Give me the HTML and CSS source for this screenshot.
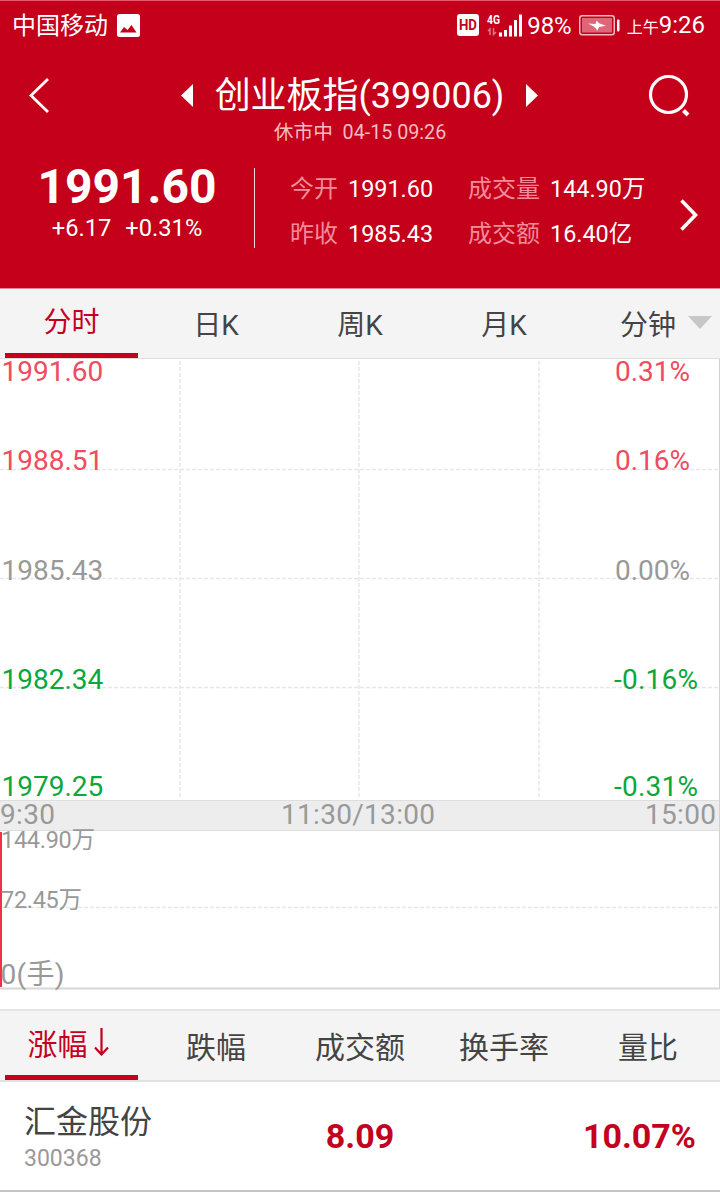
FILE: index.html
```html
<!DOCTYPE html>
<html lang="zh-CN">
<head>
<meta charset="utf-8">
<title>创业板指</title>
<link rel="stylesheet" href="styles.css">
</head>
<body>
<div class="screen">
  <header class="header">
    <div class="status">
      <span class="carrier">中国移动</span>
      <svg class="photo" width="23" height="23" viewBox="0 0 23 23"><rect width="23" height="23" rx="2.5" fill="#fff"/><path d="M3 18.500L7 13L10.500 16L14.500 11L19.500 18.500Z" fill="#c4001a"/></svg>
      <span class="grow"></span>
      <svg class="signal" width="65" height="25" viewBox="0 0 65 25">
        <rect x="0" y="1" width="22" height="22" rx="3" fill="#fff"/>
        <text x="11" y="17.2" class="hd" textLength="18" lengthAdjust="spacingAndGlyphs">HD</text>
        <text x="30" y="11" class="fourg" textLength="13" lengthAdjust="spacingAndGlyphs">4G</text>
        <path d="M33 22V16L31 18M36.500 15V21.500L39 19" fill="none" stroke="#e47684" stroke-width="1.500"/>
        <path d="M43.500 23.500V19.500M48.500 23.500V17M53.500 23.500V12.500M58.500 23.500V7M63.500 23.500V1.500" stroke="#fff" stroke-width="3"/>
      </svg>
      <span class="percent">98%</span>
      <svg class="battery" width="41" height="21" viewBox="0 0 41 21">
        <rect x=".75" y=".75" width="34.500" height="19" rx="2.500" fill="none" stroke="#f3b9c0" stroke-width="1.500"/>
        <rect x="3" y="3" width="30" height="14.500" fill="#df6677"/>
        <path d="M9 8.500L16.500 9L17.500 5.500L20.500 8.500L27 10.800L20 12L18.500 15.500L15.500 12Z" fill="#fff"/>
        <rect x="38" y="4.500" width="2.500" height="12" rx="1" fill="#fff"/>
      </svg>
      <span class="clock"><span class="ampm">上午</span>9:26</span>
    </div>
    <div class="titlebar">
      <svg width="22" height="36" viewBox="0 0 22 36"><path d="M20 1L3 17.500L20 34" fill="none" stroke="#fff" stroke-width="2.800"/></svg>
      <div class="title">
        <svg width="12" height="24" viewBox="0 0 12 24"><path d="M12 0V23L0 11.500Z" fill="#fff"/></svg>
        <h1>创业板指(399006)</h1>
        <svg width="12" height="24" viewBox="0 0 12 24"><path d="M0 0V23L12 11.500Z" fill="#fff"/></svg>
      </div>
      <svg width="44" height="44" viewBox="0 0 44 44"><circle cx="21.500" cy="20.500" r="18" fill="none" stroke="#fff" stroke-width="3.200"/><path d="M36.500 36.500L41 41" stroke="#fff" stroke-width="4"/></svg>
    </div>
    <div class="session">休市中&nbsp; 04-15 09:26</div>
    <div class="quote">
      <div class="price">
        <strong>1991.60</strong>
        <div class="change"><span>+6.17</span><span>+0.31%</span></div>
      </div>
      <div class="stats">
        <span class="label">今开</span><span>1991.60</span><span class="label">成交量</span><span>144.90万</span>
        <span class="label">昨收</span><span>1985.43</span><span class="label">成交额</span><span>16.40亿</span>
      </div>
      <svg class="more" width="20" height="32" viewBox="0 0 20 32"><path d="M1.500 1.500L15.500 16L1.500 30.500" fill="none" stroke="#fff" stroke-width="3.600"/></svg>
    </div>
  </header>

  <nav class="tabs periods">
    <div class="tab active">分时</div>
    <div class="tab">日K</div>
    <div class="tab">周K</div>
    <div class="tab">月K</div>
    <div class="tab">分钟<svg class="drop" width="24" height="13" viewBox="0 0 24 13"><path d="M0 0H24L12 13Z" fill="#c7c7c7"/></svg></div>
  </nav>

  <svg class="chart" width="720" height="631" viewBox="0 359 720 631">
    <g class="grid">
      <path d="M180 361V797M359 361V797M539 361V797"/>
      <path d="M0 469.500H719M0 578.500H719M0 687.500H719M0 907.500H719"/>
    </g>
    <rect x="0" y="800" width="719" height="31" fill="#ededed"/>
    <path d="M0 800.500H719M0 830.500H719" stroke="#dedede"/>
    <path d="M0 988.500H720" stroke="#d6d6d6" stroke-width="2"/>
    <path d="M719.500 359V989" stroke="#d2d2d2"/>
    <rect x="0" y="832" width="2" height="155" fill="#f0304c"/>
    <g class="up"><text x="1.500" y="380.500">1991.60</text><text x="1.500" y="469.500">1988.51</text><text x="615" y="380.500">0.31%</text><text x="615" y="469.500">0.16%</text></g>
    <g class="flat"><text x="1.500" y="579.500">1985.43</text><text x="615" y="579.500">0.00%</text></g>
    <g class="down"><text x="1.500" y="688.500">1982.34</text><text x="1.500" y="795.500">1979.25</text><text x="614" y="688.500" textLength="84">-0.16%</text><text x="614" y="795.500" textLength="84">-0.31%</text></g>
    <g class="axis"><text x="0" y="823.500" textLength="55">9:30</text><text x="281" y="823.500" textLength="154">11:30/13:00</text><text x="645" y="823.500" textLength="71">15:00</text></g>
    <g class="flat"><text class="vol" x="1" y="847.500" textLength="94">144.90万</text><text class="vol" x="1" y="907.500" textLength="81">72.45万</text><text x="0.500" y="984" textLength="64">0(手)</text></g>
  </svg>

  <nav class="tabs ranks">
    <div class="tab active">涨幅<svg class="sort" width="15" height="28" viewBox="0 0 15 28"><path d="M7.500 0V26M1 19.500L7.500 26.500L14 19.500" fill="none" stroke="#c4001f" stroke-width="2.200"/></svg></div>
    <div class="tab">跌幅</div>
    <div class="tab">成交额</div>
    <div class="tab">换手率</div>
    <div class="tab">量比</div>
  </nav>

  <div class="stock">
    <div class="who"><div class="name">汇金股份</div><div class="code">300368</div></div>
    <div class="last">8.09</div>
    <div class="gain">10.07%</div>
  </div>
</div>
</body>
</html>
```
FILE: styles.css
```css
* { box-sizing: border-box; }
body { margin: 0; background: #fff; }
svg { display: block; flex: none; }
.screen {
  width: 720px; height: 1200px; overflow: hidden; background: #fff;
  font-family: Roboto, "Noto Sans CJK SC", sans-serif; color: #444; white-space: nowrap;
}
.header { height: 289px; background: #c4001a; color: #fff; border-top: 1px solid #e8586c; border-bottom: 1px solid #e68a97; }
.status { display: flex; align-items: center; height: 48px; padding: 2px 15px 0 12px; font-size: 24px; line-height: 46px; }
.photo { margin-left: 9px; margin-top: -2px; }
.signal { margin-top: -1px; }
.grow { flex: 1; }
.hd { font: bold 14px Roboto, sans-serif; fill: #c4001a; text-anchor: middle; }
.fourg { font: bold 12px Roboto, sans-serif; fill: #fff; }
.percent { margin-left: 5px; }
.battery { margin-left: 7px; margin-top: -2px; }
.clock { margin-left: 7px; }
.ampm { font-size: 16px; }
.titlebar { display: flex; align-items: center; justify-content: space-between; height: 68px; padding: 25px 29px 0 28px; }
.title { display: flex; align-items: center; gap: 22px; margin-left: 22px; }
h1 { margin: 0; font-size: 36px; line-height: 44px; font-weight: 400; letter-spacing: -0.05px; }
.session { height: 28px; margin-top: 2px; font-size: 19.700px; line-height: 28px; text-align: center; color: #f6bcc4; }
.quote { display: flex; align-items: flex-start; margin-top: 21px; }
.price { width: 255px; height: 80px; border-right: 1px solid #f5d5d9; text-align: center; }
.price strong { display: block; font-size: 48px; line-height: 38px; }
.change { display: flex; justify-content: center; gap: 14px; margin-top: 8px; font-size: 23.700px; line-height: 28px; }
.stats { display: grid; grid-template-columns: 58px 120px 82px 130px; grid-auto-rows: 45px; margin-left: 35px; margin-top: -1px; font-size: 23.400px; line-height: 45px; }
.label { font-size: 24px; color: #f28c9b; }
.more { margin-top: 31px; }
.tabs { display: grid; grid-template-columns: repeat(5, 144px); background: #f4f4f4; }
.tab { display: flex; align-items: center; justify-content: center; padding-bottom: 2px; }
.active { width: 133px; margin-left: 5px; border-bottom: 5px solid #c4001f; color: #c4001f; }
.periods { height: 70px; border-bottom: 1px solid #dedede; font-size: 28px; }
.drop { margin: 0 -36px 0 12px; }
.ranks { height: 73px; margin-top: 19px; border-top: 2px solid #e5e5e5; border-bottom: 2px solid #e2e2e2; font-size: 30px; }
.ranks .active { padding-right: 7px; }
.sort { margin-left: 6px; }
.grid { fill: none; stroke: #e7e7e7; stroke-width: 1.5; stroke-dasharray: 4 2; }
.chart { overflow: visible; }
.chart text { font-family: Roboto, "Noto Sans CJK SC", sans-serif; font-size: 28px; }
.chart .vol { font-size: 23.500px; }
.up { fill: #ee4c60; }
.flat, .axis { fill: #999; }
.down { fill: #0aa83c; }
.stock { display: grid; grid-template-columns: 240px 240px 240px; height: 110px; align-items: center; border-bottom: 2px solid #c4c4c4; }
.who { padding: 6px 0 0 24px; }
.name { font-size: 32px; line-height: 40px; }
.code { font-size: 23px; line-height: 34px; color: #999; }
.last, .gain { font-size: 34px; font-weight: 700; color: #c4001f; text-align: center; }
.gain { text-align: right; padding-right: 24px; }
```
